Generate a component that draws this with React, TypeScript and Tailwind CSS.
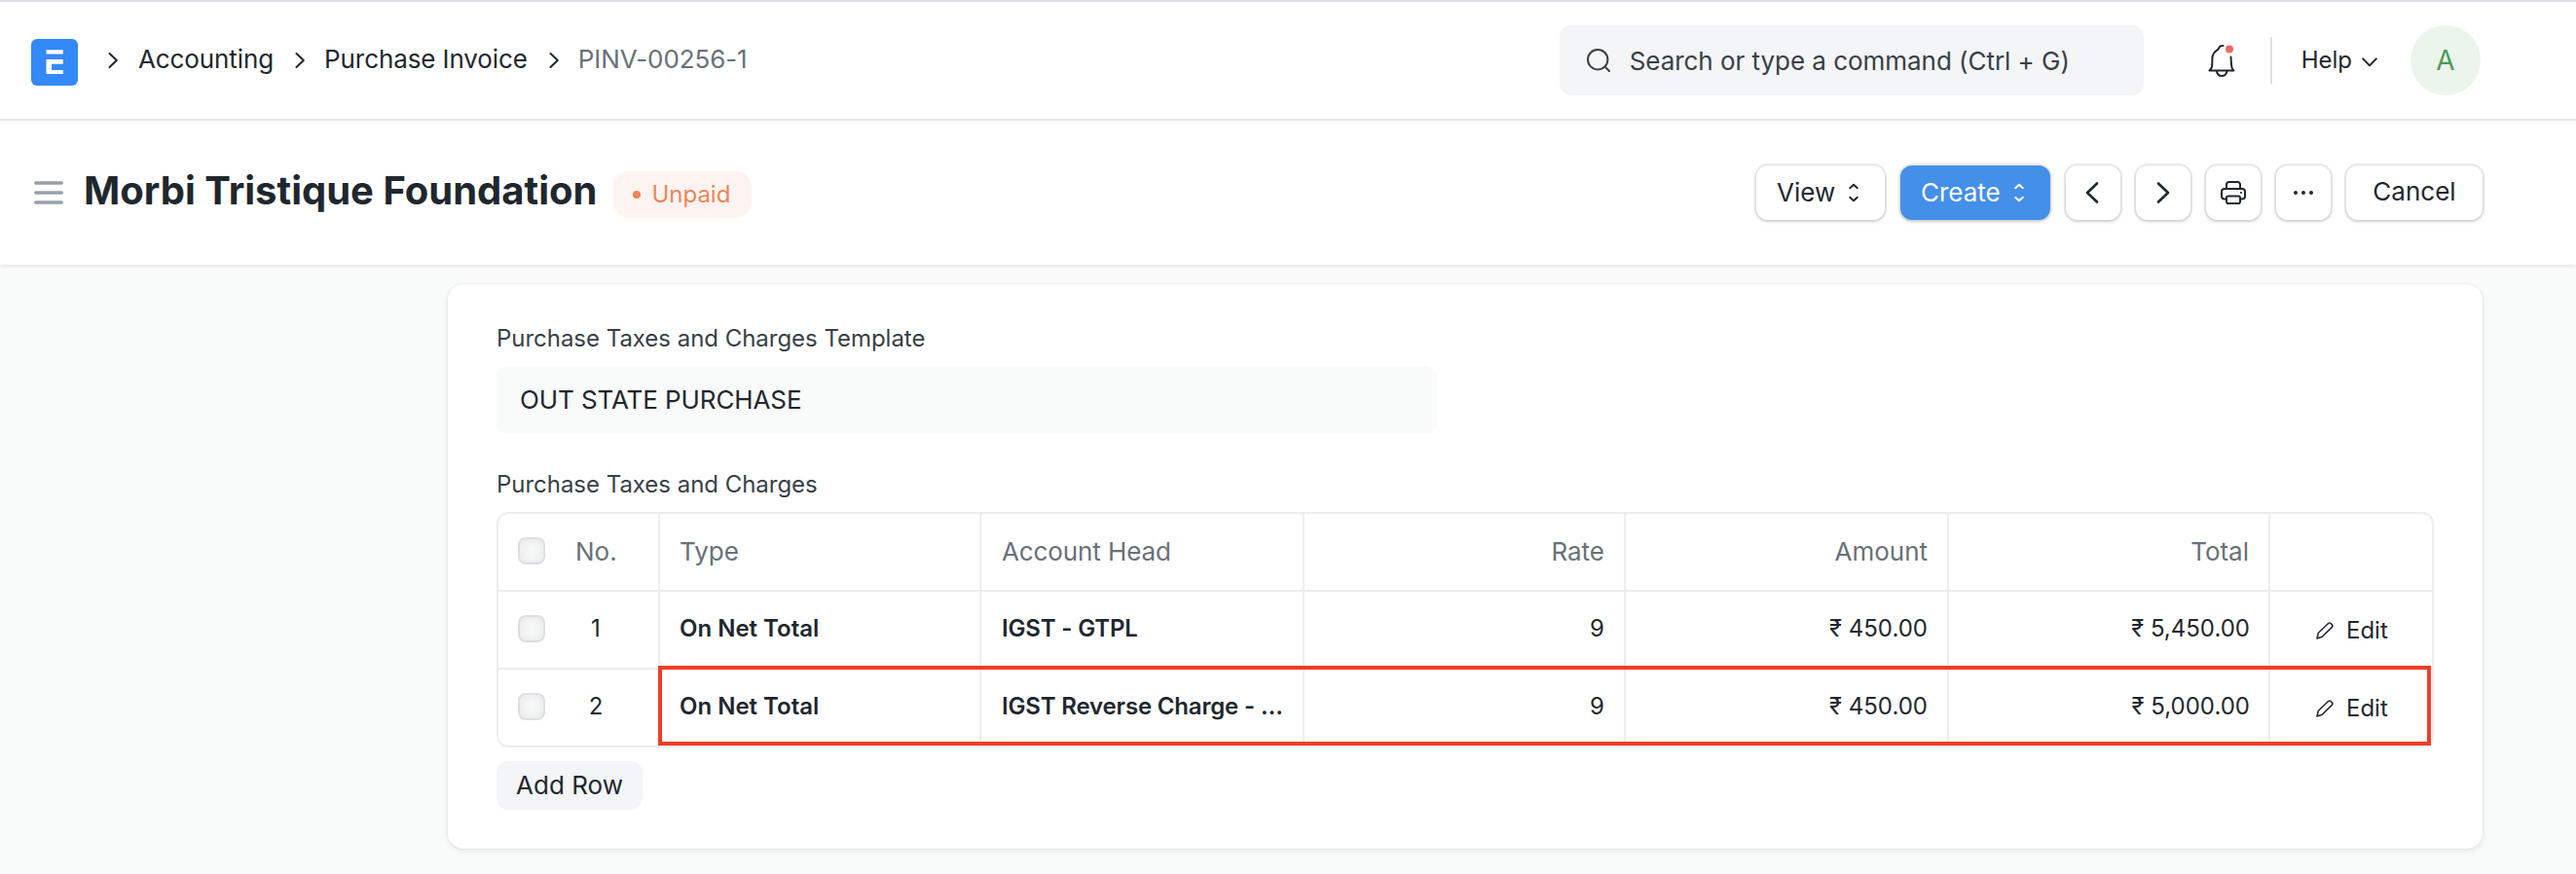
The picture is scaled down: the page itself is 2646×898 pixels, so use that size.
import React from "react";

type Row = { no: number; type: string; head: string; rate: string; amount: string; total: string };

const rows: Row[] = [
  { no: 1, type: "On Net Total", head: "IGST - GTPL", rate: "9", amount: "₹ 450.00", total: "₹ 5,450.00" },
  { no: 2, type: "On Net Total", head: "IGST Reverse Charge - …", rate: "9", amount: "₹ 450.00", total: "₹ 5,000.00" },
];

const GRID =
  "grid grid-cols-[166px_330px_332px_330px_332px_330px_1fr]";

function Crumb() {
  return (
    <svg width="10" height="18" viewBox="0 0 10 18" fill="none" stroke="#1f272e" strokeWidth="2" strokeLinecap="round" strokeLinejoin="round">
      <path d="M1.500 2 8.800 9l-7.300 7" />
    </svg>
  );
}

function UpDown() {
  return (
    <svg width="10" height="20" viewBox="0 0 10 20" fill="none" stroke="currentColor" strokeWidth="2" strokeLinecap="round" strokeLinejoin="round">
      <path d="M1.200 5.200 5 1.800 8.800 5.200M1.200 14.800 5 18.200 8.800 14.800" />
    </svg>
  );
}

function Check() {
  return (
    <span className="h-7 w-7 shrink-0 rounded-lg border-2 border-[#dcdfe3] bg-[radial-gradient(circle,#f6f8f7_20%,#e9ebea_100%)]" />
  );
}

function Btn({ children, className = "" }: { children: React.ReactNode; className?: string }) {
  return (
    <button
      className={`flex h-14 items-center rounded-xl text-[26px] leading-none shadow-[0_0_0_2px_rgba(0,0,0,0.08),0_2px_4px_rgba(0,0,0,0.12)] ${className}`}
    >
      {children}
    </button>
  );
}

function Navbar() {
  return (
    <header className="flex h-[124px] items-center border-t-2 border-b-2 border-t-[#dcdce3] border-b-[#e9ebea] bg-white pl-8 text-[26px]">
      <svg className="mt-1" width="48" height="48" viewBox="0 0 48 48">
        <rect width="48" height="48" rx="6" fill="#3489f8" />
        <path d="M15.500 11.200h17.300v4.300H15.500zM15.500 21h17.300v4.800H21v6.200h11.800v4H15.500z" fill="#fff" />
      </svg>
      <nav className="flex items-center tracking-[-0.1px]">
        <span className="ml-[31px] mr-[21px]"><Crumb /></span>
        <span className="pb-[3px]">Accounting</span>
        <span className="mr-[20px] ml-[22px]"><Crumb /></span>
        <span className="pb-[3px]">Purchase Invoice</span>
        <span className="mr-[20px] ml-[22px]"><Crumb /></span>
        <span className="pb-[3px] text-[#687178]">PINV-00256-1</span>
      </nav>
      <div className="mr-[65px] ml-auto flex h-[72px] w-[600px] items-center rounded-xl bg-[#f4f5f6] pl-7 text-[#383f47]">
        <svg width="24" height="24" viewBox="0 0 24 24" fill="none" stroke="currentColor" strokeWidth="2" strokeLinecap="round">
          <circle cx="11.200" cy="11.200" r="10.200" />
          <path d="m19 19 4 4" />
        </svg>
        <span className="ml-[20px] tracking-[-0.04px]">Search or type a command (Ctrl + G)</span>
      </div>
      <svg width="30" height="34" viewBox="0 0 30 34" fill="none" stroke="#1f272e" strokeWidth="2" strokeLinecap="round" strokeLinejoin="round">
        <path d="M16.500 2h-1c-1.800 0-2.800.8-3.600 2.800-.5 1.200-1.600 1.600-2.600 2.400C7 9 5.500 11.500 5.400 15c-.1 5 .2 8.500-1.200 10.500L2.500 27.500h25l-1.600-2C24.700 23 24.900 18 24.500 13.500" />
        <path d="M10 28.500c.5 2.600 2.500 4.500 5.200 4.500s4.700-1.900 5.200-4.500" />
        <circle cx="23" cy="5.500" r="4" fill="#ef6a62" stroke="none" />
      </svg>
      <span className="ml-[35px] h-12 w-0.5 bg-[#dce0e3]" />
      <span className="ml-[30px] text-[24px]">Help</span>
      <svg className="mt-1 ml-[10px]" width="16" height="10" viewBox="0 0 16 10" fill="none" stroke="#1f272e" strokeWidth="2" strokeLinecap="round" strokeLinejoin="round">
        <path d="M1.200 1.400 8 8.400l6.800-7" />
      </svg>
      <span className="mr-[98px] ml-[34px] flex h-[72px] w-[72px] items-center justify-center rounded-full bg-[#ebf5ec] text-[28px] text-[#4c9a5c]">A</span>
    </header>
  );
}

function PageHead() {
  return (
    <div className="relative flex h-[148px] items-center bg-white pr-24 pl-[35px] shadow-[inset_0_3px_2px_-1px_rgba(0,0,0,0.03),0_2px_4px_rgba(0,0,0,0.08)]">
      <svg width="30" height="24" viewBox="0 0 30 24" stroke="#98a1a9" strokeWidth="3.600" strokeLinecap="round">
        <path d="M1.800 2h26.400M1.800 12h26.400M1.800 22h26.400" />
      </svg>
      <h1 className="ml-[21px] pb-1 text-[40px] font-bold">Morbi Tristique Foundation</h1>
      <span className="mt-1 ml-[17px] flex h-12 w-[142px] items-center rounded-2xl bg-[#fdf4f1] pl-[20px] text-[24px] text-[#ea8657]">
        <span className="mr-[11px] h-2 w-2 rounded-full bg-[#ea8657]" />
        Unpaid
      </span>
      <div className="ml-auto flex gap-4">
        <Btn className="w-[132px] gap-[14px] bg-white pb-px pl-[21px]">View <UpDown /></Btn>
        <Btn className="w-[154px] gap-[14px] bg-[#448fe8] pb-px pl-[21px] text-white">Create <UpDown /></Btn>
        <Btn className="w-14 justify-center bg-white">
          <svg className="mr-0.5" width="14" height="24" viewBox="0 0 14 24" fill="none" stroke="#1f272e" strokeWidth="2.600" strokeLinecap="round" strokeLinejoin="round"><path d="M12 2.500 2 12l10 9.500" /></svg>
        </Btn>
        <Btn className="w-14 justify-center bg-white">
          <svg width="14" height="24" viewBox="0 0 14 24" fill="none" stroke="#1f272e" strokeWidth="2.600" strokeLinecap="round" strokeLinejoin="round"><path d="m2 2.500 10 9.500-10 9.500" /></svg>
        </Btn>
        <Btn className="w-14 justify-center bg-white">
          <svg width="28" height="26" viewBox="0 0 28 26" fill="none" stroke="#1f272e" strokeWidth="2" strokeLinejoin="round">
            <path d="M7 9V4.500A2.500 2.500 0 0 1 9.500 2h9A2.500 2.500 0 0 1 21 4.500V9" />
            <path d="M7 19.500H5A3 3 0 0 1 2 16.500V12a3 3 0 0 1 3-3h18a3 3 0 0 1 3 3v4.500a3 3 0 0 1-3 3h-2" />
            <rect x="7" y="16.500" width="14" height="7.500" rx="1.800" />
            <circle cx="22" cy="13" r="1.100" fill="#1f272e" stroke="none" />
          </svg>
        </Btn>
        <Btn className="w-14 justify-center bg-white">
          <svg width="20" height="4" viewBox="0 0 20 4" fill="#1f272e"><circle cx="2" cy="2" r="2" /><circle cx="10" cy="2" r="2" /><circle cx="18" cy="2" r="2" /></svg>
        </Btn>
        <Btn className="w-[140px] justify-center bg-white pb-0.5">Cancel</Btn>
      </div>
    </div>
  );
}

function Pencil() {
  return (
    <svg width="18" height="18" viewBox="0 0 18 18" fill="none" stroke="#1f272e" strokeWidth="1.500" strokeLinejoin="round">
      <path d="M1 17l1.200-5.500L12.800 1.300a1.400 1.400 0 0 1 2 0l1.800 1.800a1.400 1.400 0 0 1 0 2L6.200 15.200 1 17z" />
    </svg>
  );
}

function TaxTable() {
  const line = "border-r-2 border-[#ebedee] pb-0.5";
  return (
    <div className="relative h-[242px] rounded-xl border-2 border-[#ebedee]">
      <div className={`${GRID} h-20 border-b-2 border-[#ebedee] text-[26px] text-[#687178]`}>
        <div className={`flex items-center pl-5 ${line}`}>
          <Check />
          <span className="ml-[31px]">No.</span>
        </div>
        <div className={`flex items-center pl-5 ${line}`}>Type</div>
        <div className={`flex items-center pl-[21px] tracking-[-0.1px] ${line}`}>Account Head</div>
        <div className={`flex items-center justify-end pr-5 ${line}`}>Rate</div>
        <div className={`flex items-center justify-end pr-5 ${line}`}>Amount</div>
        <div className={`flex items-center justify-end pr-5 ${line}`}>Total</div>
        <div />
      </div>
      {rows.map((r) => (
        <div key={r.no} className={`${GRID} h-20 border-b-2 border-[#ebedee] text-[24px] last-of-type:h-[78px] last-of-type:border-b-0`}>
          <div className={`flex items-center pl-5 ${line}`}>
            <Check />
            <span className="ml-8 w-10 text-center">{r.no}</span>
          </div>
          <div className={`flex items-center pl-5 font-semibold ${line}`}>{r.type}</div>
          <div className={`flex items-center pl-[21px] font-semibold tracking-[-0.17px] whitespace-nowrap ${line}`}>{r.head}</div>
          <div className={`flex items-center justify-end pr-5 ${line}`}>{r.rate}</div>
          <div className={`flex items-center justify-end pr-5 ${line}`}>{r.amount}</div>
          <div className={`flex items-center justify-end pr-[19px] ${line}`}>{r.total}</div>
          <div className="flex items-center gap-[13px] pt-0.5 pl-[47px]">
            <Pencil />
            <span>Edit</span>
          </div>
        </div>
      ))}
      <span className="pointer-events-none absolute top-[156px] right-px h-[82px] w-[1821px] border-4 border-[#ef3e26]" />
    </div>
  );
}

export default function App() {
  return (
    <div className="h-[898px] w-[2646px] overflow-hidden bg-[#f9fafa] font-['Inter',sans-serif] text-[#1f272e]">
      <Navbar />
      <PageHead />
      <main className="mt-5 mr-24 ml-[460px] h-[580px] rounded-2xl bg-white px-[50px] pt-[41px] shadow-[0_0_2px_rgba(0,0,0,0.1),0_2px_6px_rgba(0,0,0,0.08)]">
        <p className="text-[24px] leading-[30px] tracking-[-0.03px] text-[#383f47]">Purchase Taxes and Charges Template</p>
        <div className="mt-[13px] flex h-[70px] w-[966px] items-center rounded-xl bg-[#f9fafa] pb-0.5 pl-6 text-[26px] tracking-[-0.1px]">OUT STATE PURCHASE</div>
        <p className="mt-[37px] mb-[13px] text-[24px] leading-[30px] tracking-[-0.03px] text-[#383f47]">Purchase Taxes and Charges</p>
        <TaxTable />
        <button className="mt-[14px] h-[50px] w-[150px] rounded-xl bg-[#f4f5f6] text-[26px] leading-none">Add Row</button>
      </main>
    </div>
  );
}
